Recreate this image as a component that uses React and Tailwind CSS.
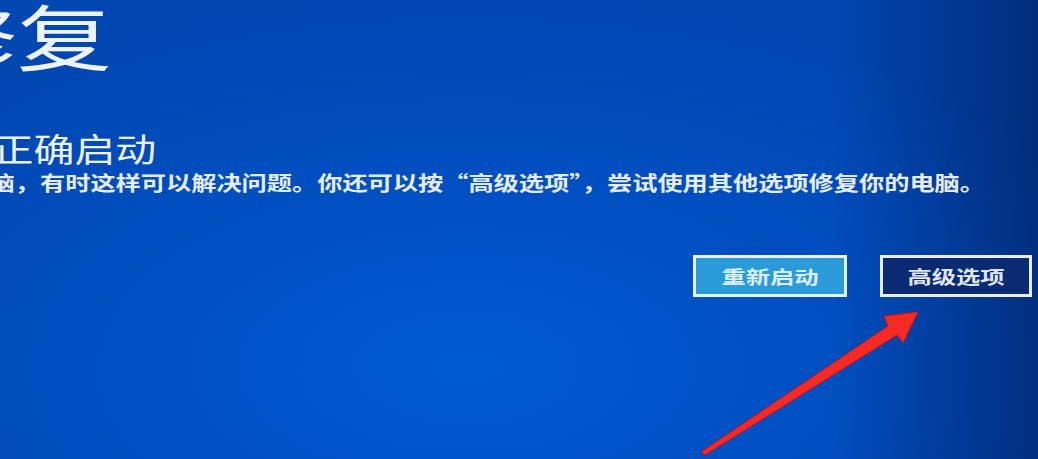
export default function App() {
  return (
    <div
      className="relative w-[1038px] h-[459px] overflow-hidden text-white bg-[linear-gradient(to_right,rgba(0,0,0,0)_80%,rgba(2,20,70,0.5)_100%),radial-gradient(ellipse_70%_80%_at_45%_80%,#005bd2_0%,#0050c3_45%,#0047b2_100%)]"
      style={{ fontFamily: '"Noto Sans CJK SC", "Noto Sans", sans-serif' }}
    >
      <div className="flex flex-col">
        <div className="mt-[-2px] ml-[-268px] whitespace-nowrap text-[72px] leading-none font-normal text-[#eef2fb] origin-left scale-x-[1.32]">
          自动修复
        </div>
        <div className="mt-[62px] ml-[-212px] whitespace-nowrap text-[33px] leading-none text-[#eef2fb] origin-left scale-x-[1.24]">
          你的电脑未正确启动
        </div>
        <div className="mt-[8px] ml-[-338px] whitespace-nowrap text-[20px] leading-none font-bold text-[#e6ecf8] origin-left scale-x-[1.26]">
          按“重新启动”以重启你的电脑，有时这样可以解决问题。你还可以按“高级选项”，尝试使用其他选项修复你的电脑。
        </div>
        <div className="mt-[62px] flex justify-end gap-[33px] pr-[6px]">
          <button className="w-[154px] h-[42px] border-[3px] border-[#e8f2fa] bg-[#2a9ad8] flex items-center justify-center">
            <span className="text-[18px] leading-none font-bold text-[#dcefff] scale-x-[1.35]">重新启动</span>
          </button>
          <button className="w-[152px] h-[42px] border-[3px] border-[#e8eef8] bg-[#0b2a74] flex items-center justify-center">
            <span className="text-[18px] leading-none font-bold text-[#dfe8f6] scale-x-[1.35]">高级选项</span>
          </button>
        </div>
      </div>
      <svg className="absolute left-0 top-0" width="1038" height="459" viewBox="0 0 1038 459">
        <polygon
          points="701,452 888,326 884,316 918,312 903,343 897,335 705,455"
          fill="#f52a24"
          stroke="#c8141c"
          strokeWidth="1"
          strokeLinejoin="round"
        />
      </svg>
    </div>
  )
}
